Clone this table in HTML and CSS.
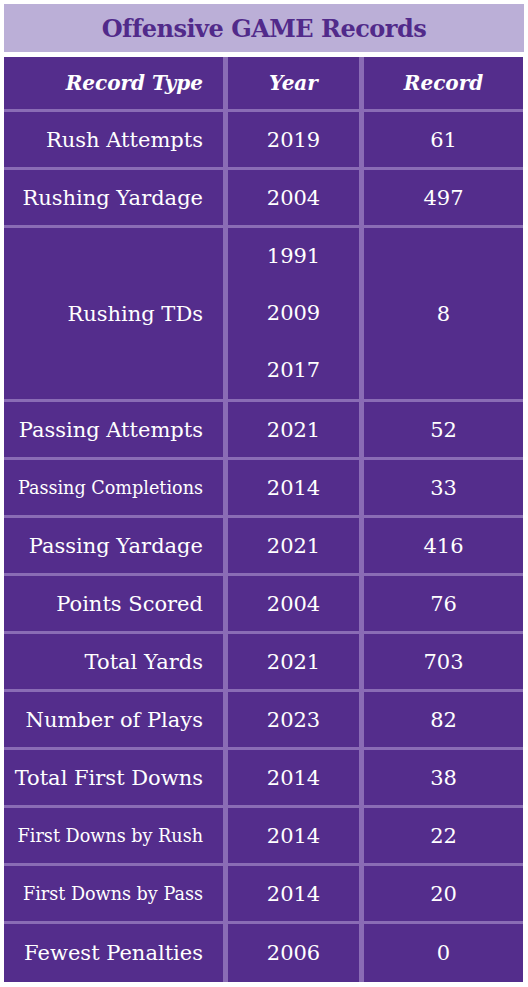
FILE: index.html
```html
<!DOCTYPE html>
<html lang="en">
<head>
  <meta charset="UTF-8" />
  <meta name="viewport" content="width=device-width, initial-scale=1.0"/>
  <title>Offensive GAME Records</title>
  <link rel="stylesheet" href="styles.css">
</head>
<body>

  <div class="title-bar">
    <h1>Offensive GAME Records</h1>
  </div>

  <table class="records">
    <thead>
      <tr>
        <th class="type">Record Type</th>
        <th class="year">Year</th>
        <th class="record">Record</th>
      </tr>
    </thead>
    <tbody>
      <tr>
        <td class="type">Rush Attempts</td>
        <td class="year">2019</td>
        <td class="record">61</td>
      </tr>
      <tr>
        <td class="type">Rushing Yardage</td>
        <td class="year">2004</td>
        <td class="record">497</td>
      </tr>
      <tr class="tall">
        <td class="type">Rushing TDs</td>
        <td class="year">
          <div class="sub-year">1991</div>
          <div class="sub-year">2009</div>
          <div class="sub-year">2017</div>
        </td>
        <td class="record">8</td>
      </tr>
      <tr>
        <td class="type">Passing Attempts</td>
        <td class="year">2021</td>
        <td class="record">52</td>
      </tr>
      <tr>
        <td class="type small">Passing Completions</td>
        <td class="year">2014</td>
        <td class="record">33</td>
      </tr>
      <tr>
        <td class="type">Passing Yardage</td>
        <td class="year">2021</td>
        <td class="record">416</td>
      </tr>
      <tr>
        <td class="type">Points Scored</td>
        <td class="year">2004</td>
        <td class="record">76</td>
      </tr>
      <tr>
        <td class="type">Total Yards</td>
        <td class="year">2021</td>
        <td class="record">703</td>
      </tr>
      <tr>
        <td class="type">Number of Plays</td>
        <td class="year">2023</td>
        <td class="record">82</td>
      </tr>
      <tr>
        <td class="type">Total First Downs</td>
        <td class="year">2014</td>
        <td class="record">38</td>
      </tr>
      <tr>
        <td class="type small">First Downs by Rush</td>
        <td class="year">2014</td>
        <td class="record">22</td>
      </tr>
      <tr>
        <td class="type small">First Downs by Pass</td>
        <td class="year">2014</td>
        <td class="record">20</td>
      </tr>
      <tr>
        <td class="type">Fewest Penalties</td>
        <td class="year">2006</td>
        <td class="record">0</td>
      </tr>
    </tbody>
  </table>

</body>
</html>
```

FILE: styles.css
```css
* {
  box-sizing: border-box;
}

body {
  font-family: "DejaVu Serif", "Liberation Serif", serif;
  margin: 0;
  background-color: #fff;
  color: #fff;
}

.title-bar {
  margin: 4px 4px 0 4px;
  height: 48px;
  background-color: #bbafd7;
  display: flex;
  align-items: center;
  justify-content: center;
}

.title-bar h1 {
  margin: 0;
  font-size: 24px;
  font-weight: bold;
  color: #512a8a;
  letter-spacing: -0.5px;
}

.records {
  margin: 5px 0 0 4px;
  width: 519px;
  border-collapse: separate;
  border-spacing: 0;
  background-color: #542d8c;
  table-layout: fixed;
}

.records th,
.records td {
  padding: 0;
  border-bottom: 3px solid #8a6cb5;
  font-size: 21px;
  font-weight: normal;
}

.records tbody tr:last-child td {
  border-bottom: none;
}

.records th {
  height: 55px;
  font-size: 20px;
  font-weight: bold;
  font-style: italic;
}

.records td {
  height: 58px;
}

.records .type {
  width: 224px;
  text-align: right;
  padding-right: 20px;
  border-right: 5px solid #8a6cb5;
}

.records .year {
  width: 136px;
  text-align: center;
  border-right: 5px solid #8a6cb5;
}

.records .record {
  text-align: center;
}

.records .small {
  font-size: 17.6px;
}

.tall td {
  height: 174px;
}

.sub-year {
  line-height: 57px;
}
```
